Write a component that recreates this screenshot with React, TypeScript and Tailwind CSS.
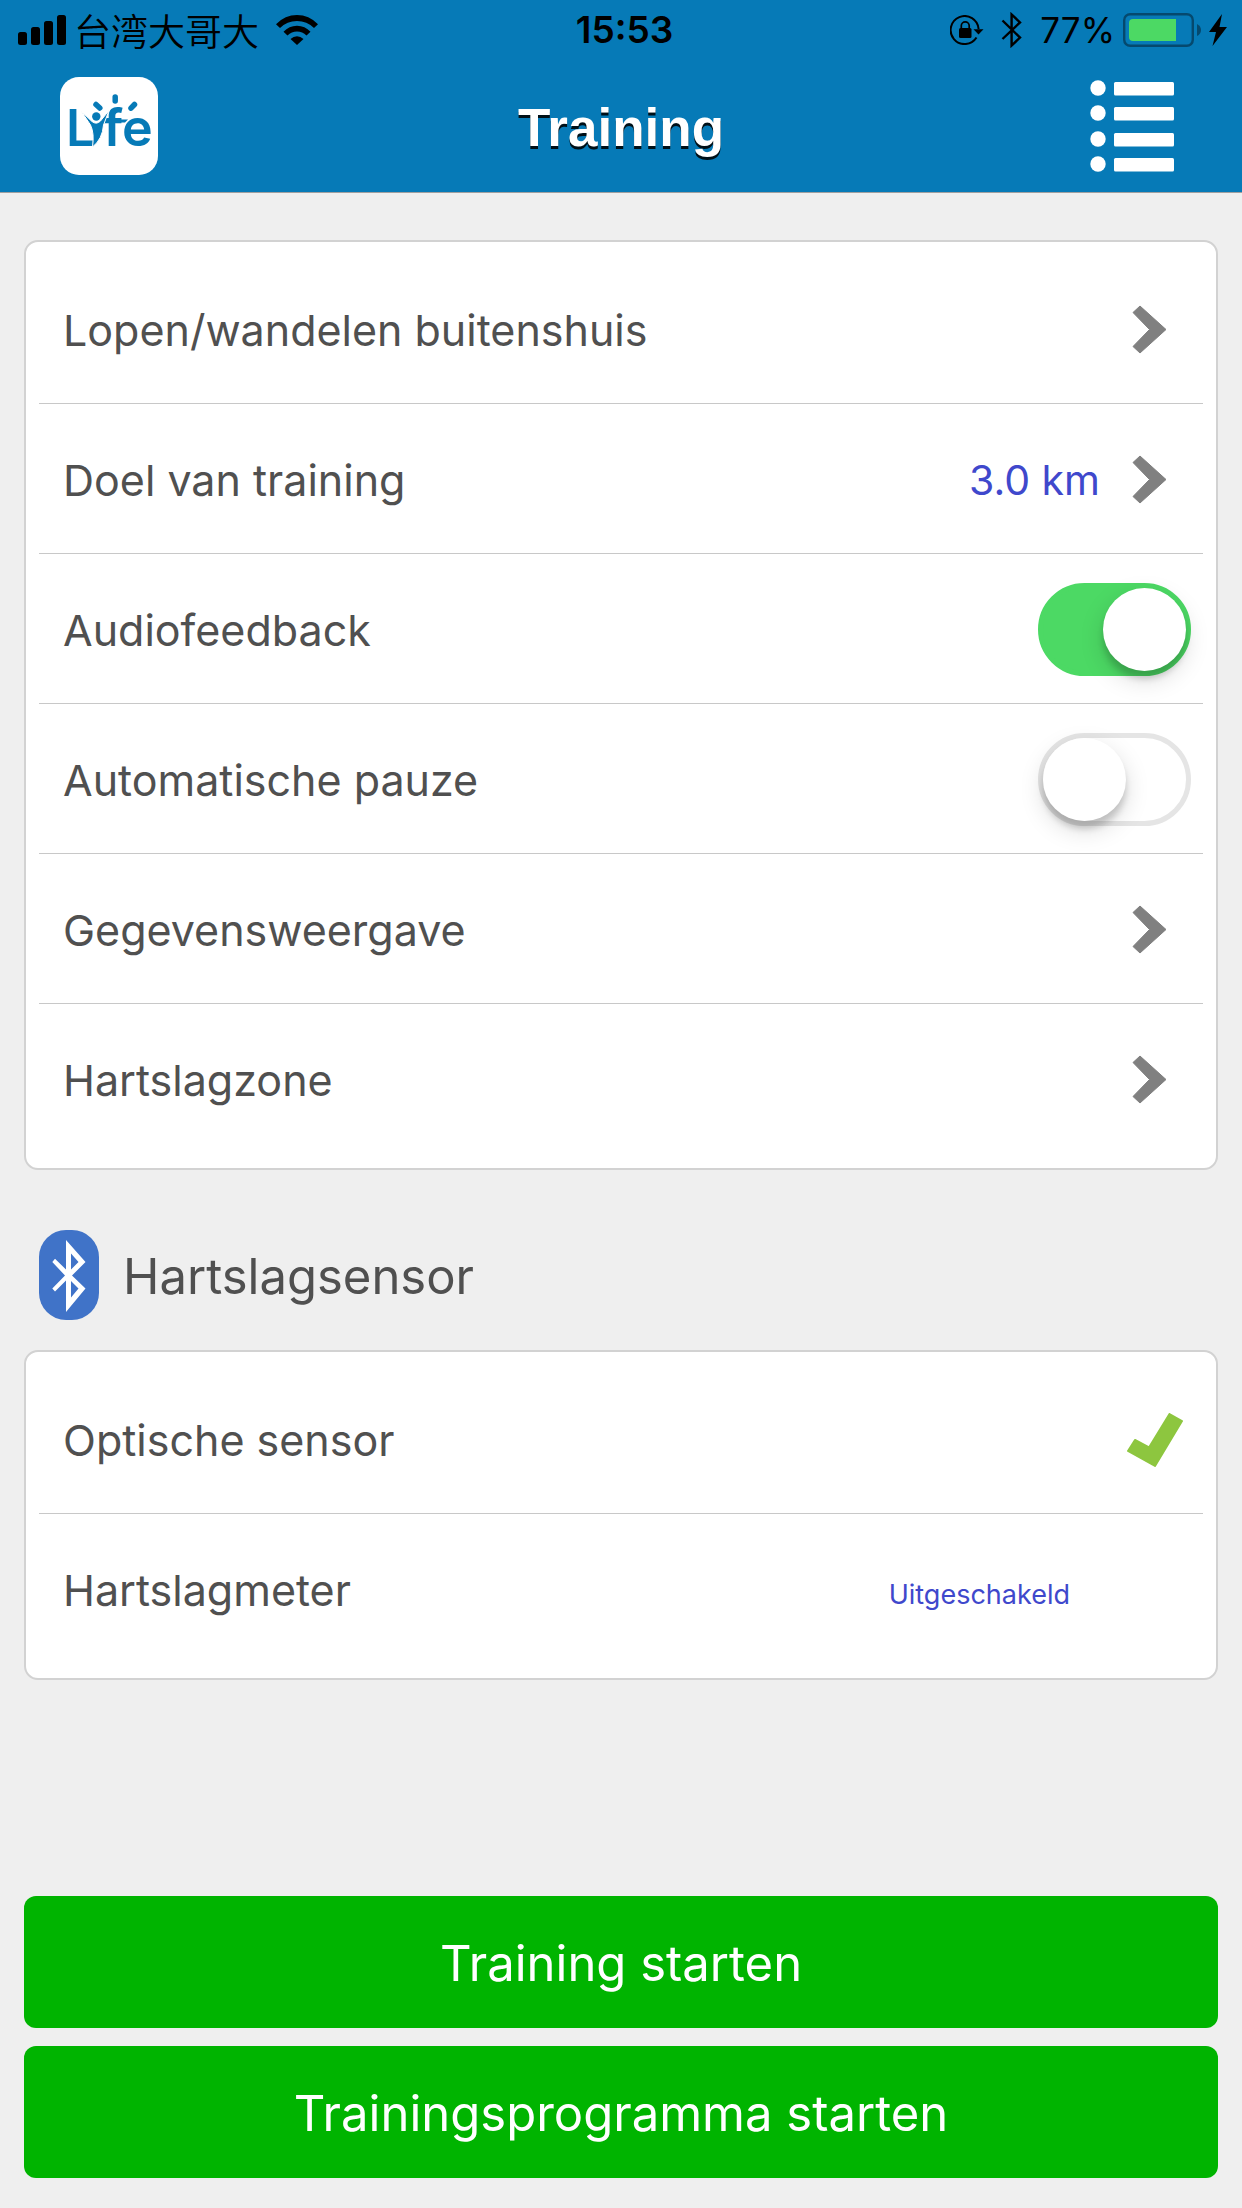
import React, { useState } from "react";

function SignalIcon() {
  return (
    <svg className="h-[30px] w-12 shrink-0" viewBox="0 0 48 30" aria-hidden="true">
      <rect x="0" y="17" width="9" height="13" rx="2.5" />
      <rect x="13" y="12" width="9" height="18" rx="2.5" />
      <rect x="26" y="6" width="9" height="24" rx="2.5" />
      <rect x="39" y="0" width="9" height="30" rx="2.5" />
    </svg>
  );
}

function WifiIcon() {
  return (
    <svg className="h-[30px] w-[42px] shrink-0" viewBox="0 0 42 30" aria-hidden="true">
      <path d="M0 9.2 Q9 0 21 0 Q33 0 42 9.2 L38 13 Q31 6 21 6 Q11 6 4 13 Z" />
      <path d="M7.5 16.8 Q13 10.8 21 10.8 Q29 10.8 34.5 16.8 L30.5 20.6 Q26.5 16.5 21 16.5 Q15.5 16.5 11.5 20.6 Z" />
      <path d="M14.5 24 Q17.5 21.3 21 21.3 Q24.5 21.3 27.5 24 L21 30 Z" />
    </svg>
  );
}

function RotationLockIcon() {
  return (
    <svg className="h-[30px] w-[34px] shrink-0" viewBox="0 0 34 30" aria-hidden="true">
      <path d="M28.6 14 A14 14 0 1 0 26.5 22.5" fill="none" stroke="black" strokeWidth="2" />
      <path d="M23.5 14.2 H33.5 L28.5 19.6 Z" />
      <rect x="9" y="13" width="12.5" height="10" rx="1.5" />
      <path d="M11.3 13.5 V10.8 A3.9 3.9 0 0 1 19.2 10.8 V13.5" fill="none" stroke="black" strokeWidth="1.7" />
    </svg>
  );
}

function BluetoothIcon() {
  return (
    <svg className="h-9 w-[22px] shrink-0" viewBox="0 0 22 36" aria-hidden="true">
      <path d="M1.5 8.5 L19 25.6 L10.6 33.5 V2.5 L19 10.4 L1.5 27" fill="none" stroke="black" strokeWidth="2.4" />
    </svg>
  );
}

function BatteryIcon() {
  return (
    <svg className="h-[34px] w-[78px] shrink-0" viewBox="0 0 78 34" aria-hidden="true">
      <rect x="1.2" y="1.2" width="68.6" height="31.6" rx="6" fill="none" stroke="#05496e" strokeWidth="2.4" />
      <path d="M74 11 Q78 13 78 17 Q78 21 74 23 Z" fill="#05496e" />
      <path d="M10 6 H53 V28 H10 Q6 28 6 24 V10 Q6 6 10 6 Z" fill="#4cd964" />
    </svg>
  );
}

function BoltIcon() {
  return (
    <svg className="h-8 w-[18px] shrink-0" viewBox="0 0 18 32" aria-hidden="true">
      <path d="M13 0 L0 18 H7 L3.5 32 L18 13 H10.5 Z" />
    </svg>
  );
}

function LyfeLogo() {
  return (
    <svg className="size-[98px] shrink-0" viewBox="0 0 98 98" role="img" aria-label="Lyfe">
      <rect width="98" height="98" rx="19" fill="white" />
      <g fill="#067ab7" fontFamily="Inter, sans-serif" fontWeight="600">
        <text x="6" y="69" fontSize="51">L</text>
        <text x="43" y="69" fontSize="52">fe</text>
        <path d="M45 42.5 H68 L65 45.5 H46 Z" />
        <path
          d="M21.5 34.5 L32 44.5 Q36.5 48 40.5 44 L49 33.5 L43.5 48 Q42.5 62 32.5 70 Q34.5 56 30.5 48 Z"
          stroke="white"
          strokeWidth="1"
        />
        <circle cx="36.3" cy="39.5" r="4.2" />
      </g>
      <g stroke="#067ab7" strokeWidth="5.5" strokeLinecap="round">
        <path d="M55.2 20 V24" />
        <path d="M36 27.5 L39.8 31" />
        <path d="M74.5 27.5 L71 31.2" />
      </g>
    </svg>
  );
}

function ListIcon() {
  return (
    <svg className="h-[92px] w-[84px]" viewBox="0 0 84 92" fill="white" aria-hidden="true">
      {[8, 33, 59, 84].map((y) => (
        <g key={y}>
          <circle cx="8" cy={y} r="7.7" />
          <rect x="24" y={y - 6} width="60" height="13.5" rx="1.5" />
        </g>
      ))}
    </svg>
  );
}

function Chevron() {
  return (
    <svg className="h-[49px] w-[35px] shrink-0" viewBox="0 0 35 49" aria-hidden="true">
      <path
        d="M1 7.5 L8 1 L34 24.5 L8 48 L1 41.5 L17.5 24.5 Z"
        fill="#808080"
        stroke="#808080"
        strokeWidth="1"
        strokeLinejoin="round"
      />
    </svg>
  );
}

function BluetoothBadge() {
  return (
    <svg className="h-[90px] w-[60px] shrink-0" viewBox="0 0 60 90" aria-hidden="true">
      <rect width="60" height="90" rx="27" fill="#4073c8" />
      <path
        fill="white"
        fillRule="evenodd"
        d="M27 10 L46.5 32 L33 45.5 L46.5 58.5 L27 82 V50.5 L16 61.5 L13.3 58.5 L26 45.5 L13.3 32 L16 28.7 L27 39.5 Z M32 23.5 V39.5 L39.5 32 Z M32 51 V67.5 L39.5 58.5 Z"
      />
    </svg>
  );
}

function CheckIcon() {
  return (
    <svg className="h-[54px] w-14 shrink-0" viewBox="0 0 56 54" role="img" aria-label="Geselecteerd">
      <path
        d="M1 38 L8 27 L22 34.5 L42.5 1 L55 8 L28 53 Z"
        fill="#8dc63f"
        stroke="#8dc63f"
        strokeWidth="2"
        strokeLinejoin="round"
      />
    </svg>
  );
}

const rowClass =
  "flex h-[150px] w-full items-center border-b border-[#c8c8c8] pt-0.5 pl-6 text-left text-[43px] leading-[60px]";

function Card({ children }: { children: React.ReactNode }) {
  return (
    <div className="rounded-[14px] border-2 border-[#d2d2d2] bg-white px-[13px] pt-3 pb-3.5 *:last:border-transparent">
      {children}
    </div>
  );
}

function LinkRow({ label, value }: { label: string; value?: string }) {
  return (
    <button type="button" className={`${rowClass} justify-between pr-9`}>
      <span>{label}</span>
      <span className="flex items-center gap-8">
        {value && <span className="text-[41px] text-[#3f48cc]">{value}</span>}
        <Chevron />
      </span>
    </button>
  );
}

function SwitchRow({ label, initial }: { label: string; initial: boolean }) {
  const [on, setOn] = useState(initial);
  return (
    <label className={`${rowClass} cursor-pointer justify-between pr-3`}>
      <span>{label}</span>
      <input
        type="checkbox"
        role="switch"
        checked={on}
        onChange={(e) => setOn(e.target.checked)}
        className="flex h-[93px] w-[153px] shrink-0 appearance-none items-center rounded-full border-[5px] border-[#e5e5e5] bg-white before:size-[83px] before:rounded-full before:bg-white before:shadow-[0_9px_24px_rgba(0,0,0,0.15),0_8px_6px_rgba(0,0,0,0.16)] checked:justify-end checked:border-[#4cd964] checked:bg-[#4cd964]"
      />
    </label>
  );
}

function StartButton({ children }: { children: React.ReactNode }) {
  return (
    <button
      type="button"
      className="h-[132px] w-full rounded-xl bg-[#00b400] pt-1 text-[49px] leading-[60px] text-white"
    >
      {children}
    </button>
  );
}

export default function App() {
  return (
    <div className="flex min-h-screen flex-col bg-[#efefef] font-['Inter','Noto_Sans_CJK_SC',sans-serif] text-[#505050]">
      <header className="border-b border-[#a0a0a0] bg-[#067ab7]">
        <div className="grid h-15 grid-cols-[1fr_auto_1fr] items-center pr-[15px] pl-[18px] text-black">
          <div className="flex items-center">
            <SignalIcon />
            <span className="mr-[17px] ml-2 font-['Noto_Sans_CJK_SC',sans-serif] text-[37px] leading-[60px] font-[350]">
              台湾大哥大
            </span>
            <WifiIcon />
          </div>
          <time className="pl-1 text-[37px] leading-[60px] font-semibold">15:53</time>
          <div className="flex items-center justify-end">
            <RotationLockIcon />
            <span className="ml-[17px]">
              <BluetoothIcon />
            </span>
            <span className="mr-2 ml-[17px] text-[35px] leading-[60px]">77%</span>
            <BatteryIcon />
            <span className="ml-2">
              <BoltIcon />
            </span>
          </div>
        </div>
        <div className="grid h-33 grid-cols-[1fr_auto_1fr] items-center px-15">
          <LyfeLogo />
          <h1 className="pt-1 font-['Liberation_Sans',sans-serif] text-[53px] leading-[60px] font-bold text-white [text-shadow:0_3px_0_#001018]">
            Training
          </h1>
          <button type="button" aria-label="Menu" className="justify-self-end pr-2">
            <ListIcon />
          </button>
        </div>
      </header>

      <main className="flex grow flex-col px-6 pt-[47px] pb-[30px]">
        <Card>
          <LinkRow label="Lopen/wandelen buitenshuis" />
          <LinkRow label="Doel van training" value="3.0 km" />
          <SwitchRow label="Audiofeedback" initial={true} />
          <SwitchRow label="Automatische pauze" initial={false} />
          <LinkRow label="Gegevensweergave" />
          <LinkRow label="Hartslagzone" />
        </Card>

        <div className="flex items-center gap-6 pt-15 pb-[30px] pl-[15px]">
          <BluetoothBadge />
          <h2 className="pt-1 text-[49px] leading-[60px]">Hartslagsensor</h2>
        </div>

        <Card>
          <button type="button" className={`${rowClass} justify-between pr-5`}>
            <span>Optische sensor</span>
            <CheckIcon />
          </button>
          <button type="button" className={`${rowClass} justify-between pr-[133px]`}>
            <span>Hartslagmeter</span>
            <span className="pt-2.5 text-[27px] text-[#3f48cc]">Uitgeschakeld</span>
          </button>
        </Card>

        <div className="mt-auto flex flex-col gap-[18px] pt-12">
          <StartButton>Training starten</StartButton>
          <StartButton>Trainingsprogramma starten</StartButton>
        </div>
      </main>
    </div>
  );
}
